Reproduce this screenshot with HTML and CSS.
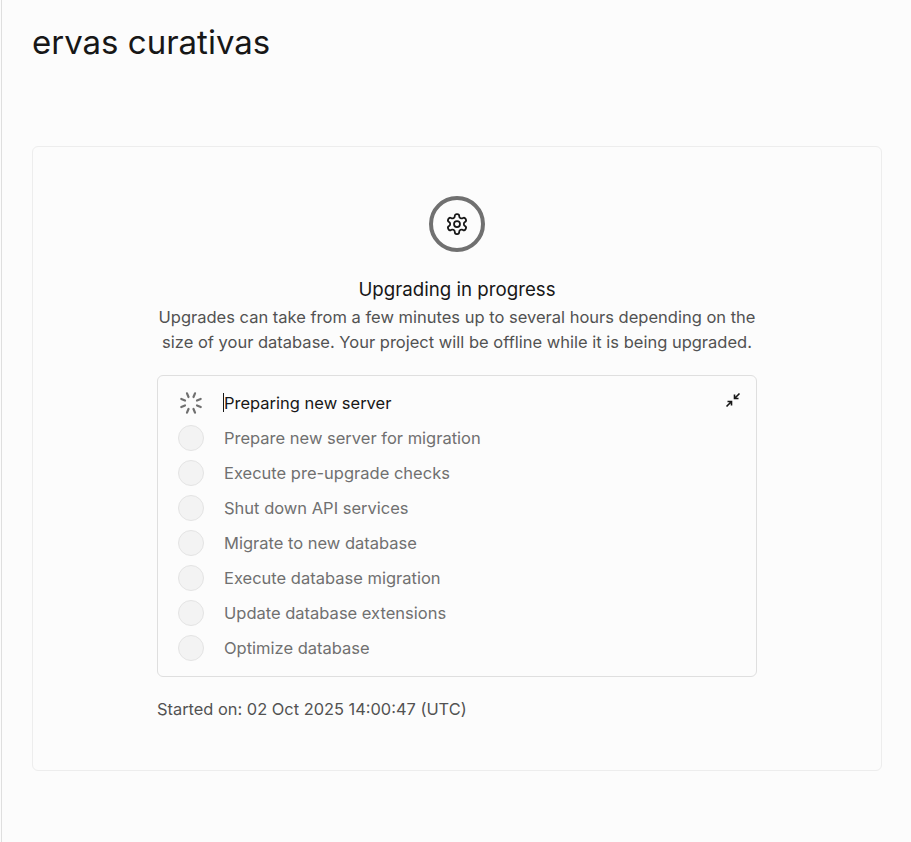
FILE: index.html
```html
<!DOCTYPE html>
<html lang="en">
<head>
    <meta charset="UTF-8">
    <meta name="viewport" content="width=device-width, initial-scale=1.0">
    <title>ervas curativas</title>
    <link rel="stylesheet" href="styles.css">
</head>
<body>
    <main class="page">
        <h1 class="project-name">ervas curativas</h1>

        <section class="upgrade-card">
            <div class="status-icon">
                <svg width="24" height="24" viewBox="0 0 24 24" fill="none" stroke="#171717" stroke-width="1.75" stroke-linecap="round" stroke-linejoin="round">
                    <path d="M12.22 2h-.44a2 2 0 0 0-2 2v.18a2 2 0 0 1-1 1.73l-.43.25a2 2 0 0 1-2 0l-.15-.08a2 2 0 0 0-2.73.73l-.22.38a2 2 0 0 0 .73 2.73l.15.1a2 2 0 0 1 1 1.72v.51a2 2 0 0 1-1 1.74l-.15.09a2 2 0 0 0-.73 2.73l.22.38a2 2 0 0 0 2.73.73l.15-.08a2 2 0 0 1 2 0l.43.25a2 2 0 0 1 1 1.73V20a2 2 0 0 0 2 2h.44a2 2 0 0 0 2-2v-.18a2 2 0 0 1 1-1.73l.43-.25a2 2 0 0 1 2 0l.15.08a2 2 0 0 0 2.73-.73l.22-.39a2 2 0 0 0-.73-2.73l-.15-.08a2 2 0 0 1-1-1.74v-.5a2 2 0 0 1 1-1.74l.15-.09a2 2 0 0 0 .73-2.73l-.22-.38a2 2 0 0 0-2.73-.73l-.15.08a2 2 0 0 1-2 0l-.43-.25a2 2 0 0 1-1-1.73V4a2 2 0 0 0-2-2z"/>
                    <circle cx="12" cy="12" r="3"/>
                </svg>
            </div>

            <h2 class="upgrade-title">Upgrading in progress</h2>
            <p class="upgrade-text">Upgrades can take from a few minutes up to several hours depending on the size of your database. Your project will be offline while it is being upgraded.</p>

            <div class="step-box">
                <button type="button" class="collapse-btn" aria-label="Collapse">
                    <svg width="16" height="16" viewBox="0 0 16 16" fill="none" stroke="#171717" stroke-width="1.6">
                        <path d="M14.5 1.5 9.5 6.5M9.5 2.5v4h4"/>
                        <path d="M1.5 14.5l5-5M2.5 9.5h4v4"/>
                    </svg>
                </button>
                <ul class="step-list">
                    <li class="step step-active">
                        <svg class="spinner" width="24" height="24" viewBox="0 0 24 24" fill="none" stroke="#707070" stroke-width="2.2" stroke-linecap="round">
                            <path d="M12 1.5v4M12 18.5v4M4.6 4.6l2.8 2.8M16.6 16.6l2.8 2.8M1.5 12h4M18.5 12h4M4.6 19.4l2.8-2.8M16.6 7.4l2.8-2.8" transform="rotate(22.5 12 12)"/>
                        </svg>
                        <span class="step-label"><span class="caret"></span>Preparing new server</span>
                    </li>
                    <li class="step"><span class="dot"></span><span class="step-label">Prepare new server for migration</span></li>
                    <li class="step"><span class="dot"></span><span class="step-label">Execute pre-upgrade checks</span></li>
                    <li class="step"><span class="dot"></span><span class="step-label">Shut down API services</span></li>
                    <li class="step"><span class="dot"></span><span class="step-label">Migrate to new database</span></li>
                    <li class="step"><span class="dot"></span><span class="step-label">Execute database migration</span></li>
                    <li class="step"><span class="dot"></span><span class="step-label">Update database extensions</span></li>
                    <li class="step"><span class="dot"></span><span class="step-label">Optimize database</span></li>
                </ul>
            </div>

            <p class="started-on">Started on: 02 Oct 2025 14:00:47 (UTC)</p>
        </section>
    </main>
</body>
</html>
```

FILE: styles.css
```css
* {
    box-sizing: border-box;
}

html,
body {
    height: 100%;
}

body {
    margin: 0;
    background-color: #fcfcfc;
    color: #171717;
    font-family: "Inter", "Liberation Sans", sans-serif;
    overflow: hidden;
}

.page {
    height: 100%;
    margin-left: 1px;
    padding: 22px 29px 0 30px;
    border-left: 1px solid #dfdfdf;
}

.project-name {
    margin: 0 0 84px;
    height: 40px;
    font-size: 33px;
    line-height: 40px;
    font-weight: 400;
    color: #171717;
}

.upgrade-card {
    display: flex;
    flex-direction: column;
    align-items: center;
    height: 625px;
    padding-top: 49px;
    border: 1px solid #ededed;
    border-radius: 6px;
}

.status-icon {
    display: flex;
    align-items: center;
    justify-content: center;
    width: 56px;
    height: 56px;
    border: 4px solid #707070;
    border-radius: 50%;
}

.upgrade-title {
    margin: 24px 0 0;
    font-size: 18.7px;
    line-height: 28px;
    font-weight: 400;
    color: #171717;
}

.upgrade-text {
    width: 620px;
    margin: 1px 0 0;
    font-size: 16.5px;
    line-height: 25px;
    text-align: center;
    color: #525252;
}

.step-box {
    position: relative;
    width: 600px;
    height: 302px;
    margin-top: 20px;
    padding: 9px 20px;
    border: 1px solid #dfdfdf;
    border-radius: 6px;
}

.collapse-btn {
    position: absolute;
    top: 16px;
    right: 15px;
    display: flex;
    padding: 0;
    border: none;
    background: none;
}

.step-list {
    margin: 0;
    padding: 0;
    list-style: none;
}

.step {
    display: flex;
    align-items: center;
    gap: 20px;
    height: 35px;
    font-size: 16.5px;
    color: #707070;
}

.step-active {
    color: #171717;
}

.spinner {
    margin: 0 1px;
    flex: none;
}

.dot {
    flex: none;
    width: 26px;
    height: 26px;
    border: 1px solid #e4e4e4;
    border-radius: 50%;
    background-color: #f3f3f3;
}

.step-label {
    position: relative;
}

.caret {
    position: absolute;
    left: -1px;
    top: 0;
    width: 1px;
    height: 19px;
    background-color: #171717;
}

.started-on {
    width: 600px;
    margin: 20px 0 0;
    font-size: 16.4px;
    line-height: 24px;
    color: #525252;
}
```
